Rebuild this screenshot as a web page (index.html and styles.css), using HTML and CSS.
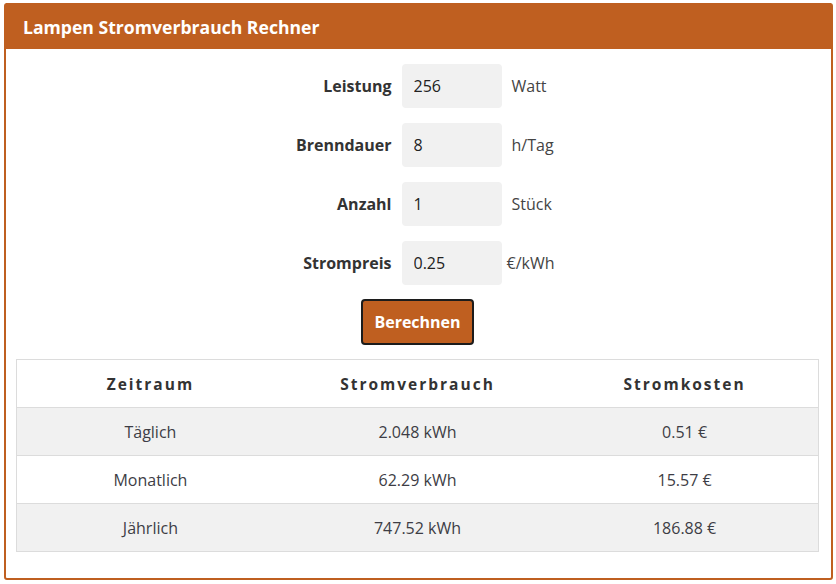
FILE: index.html
```html
<!DOCTYPE html>
<html lang="de">
<head>
<meta charset="utf-8">
<title>Lampen Stromverbrauch Rechner</title>
<link rel="stylesheet" href="styles.css">
</head>
<body>
<div class="card">
  <div class="card-header">Lampen Stromverbrauch Rechner</div>
  <div class="card-body">
    <form class="calc-form">
      <label class="field-label" for="leistung">Leistung</label>
      <input class="field-input" id="leistung" type="text" value="256">
      <span class="field-unit">Watt</span>

      <label class="field-label" for="brenndauer">Brenndauer</label>
      <input class="field-input" id="brenndauer" type="text" value="8">
      <span class="field-unit">h/Tag</span>

      <label class="field-label" for="anzahl">Anzahl</label>
      <input class="field-input" id="anzahl" type="text" value="1">
      <span class="field-unit">Stück</span>

      <label class="field-label" for="strompreis">Strompreis</label>
      <input class="field-input" id="strompreis" type="text" value="0.25">
      <span class="field-unit field-unit-tight">€/kWh</span>
    </form>
    <div class="button-row">
      <button class="calc-button" type="button">Berechnen</button>
    </div>
    <table class="result-table">
      <thead>
        <tr><th>Zeitraum</th><th>Stromverbrauch</th><th>Stromkosten</th></tr>
      </thead>
      <tbody>
        <tr><td>Täglich</td><td>2.048 kWh</td><td>0.51 €</td></tr>
        <tr><td>Monatlich</td><td>62.29 kWh</td><td>15.57 €</td></tr>
        <tr><td>Jährlich</td><td>747.52 kWh</td><td>186.88 €</td></tr>
      </tbody>
    </table>
  </div>
</div>
</body>
</html>
```
FILE: styles.css
```css
* { box-sizing: border-box; }
html, body { margin: 0; padding: 0; background: #fff; }
body {
  font-family: "Open Sans", "Noto Sans", sans-serif;
  color: #333;
}
.card {
  margin: 3px 3px 0 4px;
  height: 577px;
  border: 2px solid #bf5f20;
  border-radius: 3px;
  background: #fff;
}
.card-header {
  background: #bf5f20;
  color: #fff;
  font-weight: 700;
  font-size: 17.6px;
  height: 46px;
  line-height: 48px;
  padding-left: 17px;
  margin-top: -2px;
}
.card-body {
  padding: 15px 12px 0 10px;
}
.calc-form {
  display: grid;
  grid-template-columns: 96px 100px 48px;
  justify-content: center;
  column-gap: 10px;
  row-gap: 15px;
  align-items: center;
  margin-left: 20px;
}
.field-label {
  text-align: right;
  font-weight: 700;
  font-size: 16px;
  color: #333;
}
.field-input {
  width: 100px;
  height: 44px;
  border: none;
  border-radius: 4px;
  background: #f1f1f1;
  padding: 0 12px;
  font-family: inherit;
  font-size: 16px;
  color: #222;
  outline: none;
}
.field-unit {
  font-size: 16px;
  color: #444;
  white-space: nowrap;
}
.field-unit-tight { margin-left: -5px; }
.button-row {
  display: flex;
  justify-content: center;
  margin-top: 14px;
  padding-left: 0;
}
.calc-button {
  width: 113px;
  height: 46px;
  background: #bf5f20;
  color: #fff;
  border: 2px solid #1c1c1c;
  border-radius: 4px;
  font-family: inherit;
  font-weight: 700;
  font-size: 16px;
}
.result-table {
  width: 100%;
  margin-top: 14px;
  border-collapse: collapse;
  border: 1px solid #dcdcdc;
  table-layout: fixed;
}
.result-table th,
.result-table td {
  text-align: center;
  height: 48px;
  padding: 0;
  border-bottom: 1px solid #dcdcdc;
}
.result-table th {
  font-weight: 700;
  font-size: 15.5px;
  letter-spacing: 2px;
  color: #333;
}
.result-table td {
  font-size: 16px;
  color: #3d3d45;
}
.result-table tbody tr:nth-child(odd) { background: #f1f1f1; }
```
